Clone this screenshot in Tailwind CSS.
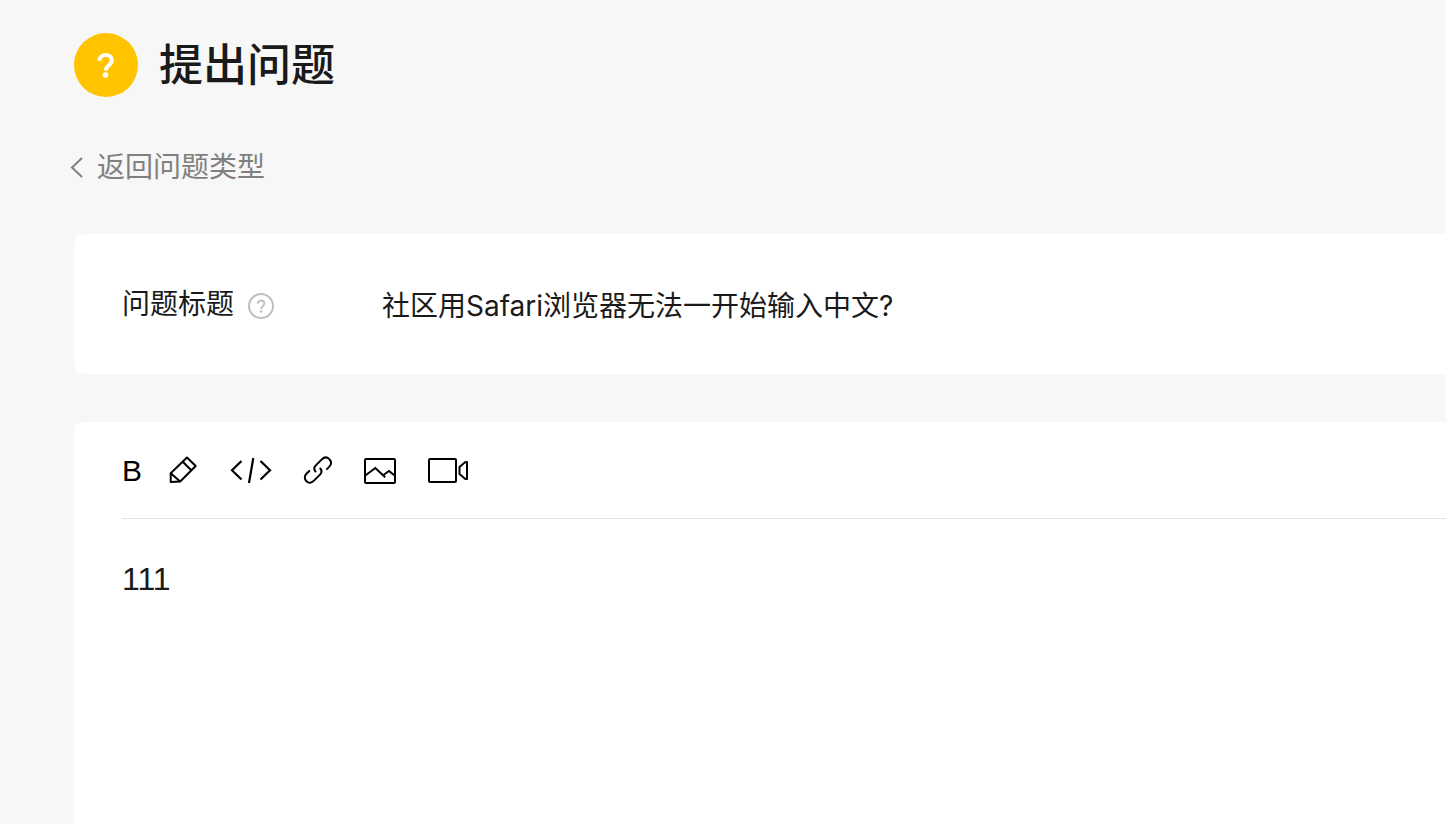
<!DOCTYPE html>
<html lang="zh-CN">
<head>
<meta charset="utf-8">
<meta name="viewport" content="width=device-width, initial-scale=1">
<title>提出问题</title>
<script src="https://cdn.jsdelivr.net/npm/@tailwindcss/browser@4"></script>
</head>
<body class="flex min-h-screen flex-col bg-[#f7f7f7] pl-[74px] pt-[33px] font-['Inter','Noto_Sans_CJK_SC',sans-serif] text-[#1a1a1a]">
  <header class="flex h-16 items-center gap-[21px]">
    <svg class="size-16 shrink-0" viewBox="0 0 64 64" fill="none" aria-hidden="true">
      <circle cx="32" cy="32" r="32" fill="#ffc300"/>
      <path d="M25.500 27.800c0-3.600 2.600-5.900 6.200-5.900s6.100 2.200 6.100 5.300c0 5-6 5-6 10.300" stroke="#fff" stroke-width="4"/>
      <circle cx="31.500" cy="42" r="2.800" fill="#fff"/>
    </svg>
    <h1 class="text-[44px] leading-16 font-medium">提出问题</h1>
  </header>

  <nav class="mt-[50px] -ml-1 h-10">
    <a href="#" class="inline-flex items-center gap-3 text-[28px] leading-10 text-[#808080]">
      <svg class="h-6 w-[15px]" viewBox="0 0 15 24" fill="none" stroke="currentColor" stroke-width="2" aria-hidden="true"><path d="M12 3 2 12.500 12 22"/></svg>
      返回问题类型
    </a>
  </nav>

  <main class="mt-[47px] flex grow flex-col gap-12">
    <section class="flex h-[140px] shrink-0 items-center rounded-l-lg bg-white pl-12">
      <div class="flex w-[260px] shrink-0 items-center gap-[14px]">
        <label for="title" class="text-[28px] leading-10">问题标题</label>
        <button type="button" aria-label="帮助" class="mt-1">
          <svg class="size-[26px]" viewBox="0 0 26 26" fill="none" stroke="#bfbfbf" aria-hidden="true">
            <circle cx="13" cy="13" r="12" stroke-width="2"/>
            <path d="M9.800 10.800c0-2 1.400-3.300 3.300-3.300s3.300 1.200 3.300 3c0 2.700-3.300 2.800-3.300 5.600" stroke-width="1.800"/>
            <circle cx="13.100" cy="18.500" r="1.300" fill="#bfbfbf" stroke="none"/>
          </svg>
        </button>
      </div>
      <input id="title" type="text" value="社区用Safari浏览器无法一开始输入中文?" class="h-12 min-w-0 grow bg-transparent text-[28px] outline-none">
    </section>

    <section class="flex grow flex-col rounded-tl-lg bg-white pl-12">
      <div role="toolbar" aria-label="编辑工具" class="flex h-[97px] shrink-0 items-center gap-6 border-b border-[#e5e5e5] text-black">
        <button type="button" aria-label="加粗" class="w-5 pt-0.5 text-left font-['Liberation_Sans',sans-serif] text-[30px] leading-9">B</button>
        <button type="button" aria-label="标记">
          <svg class="h-9 w-9" viewBox="0 0 36 36" fill="none" stroke="currentColor" stroke-width="2" stroke-linejoin="round" aria-hidden="true"><path d="M21 5.500 29.700 14 14.200 29.500 4.700 30v-8.800zM17 10l8.500 8.500M4.700 21.200l9.500 8.300"/></svg>
        </button>
        <button type="button" aria-label="代码">
          <svg class="h-9 w-[50px]" viewBox="0 0 50 36" fill="none" stroke="currentColor" stroke-width="2.200" aria-hidden="true"><path d="M15.500 9 6 18.300l9.500 9.200M27.300 6 23 31M34.500 9l9.500 9.300-9.500 9.200"/></svg>
        </button>
        <button type="button" aria-label="链接">
          <svg class="h-9 w-9" viewBox="0 0 36 36" fill="none" stroke="currentColor" stroke-width="2" stroke-linecap="round" aria-hidden="true"><path d="M15.500 19.500c-1.700-2-1.500-4.300.3-6.100l6-6c2.400-2.400 5.400-2.400 7.600-.2s2.200 5.200 0 7.400l-2.500 2.500M20.300 16.500c1.700 2 1.500 4.300-.3 6.100l-6.300 6.300c-2.200 2.200-5.200 2.400-7.300.3s-2.200-5.200 0-7.400L9.300 19"/></svg>
        </button>
        <button type="button" aria-label="图片">
          <svg class="h-9 w-10" viewBox="0 0 40 36" fill="none" stroke="currentColor" stroke-width="2" aria-hidden="true"><rect x="5" y="7" width="30" height="24" rx="1"/><path d="M5 23.800 15.300 16l9.900 9.200M23.500 23l5.500-4 6 4.800"/></svg>
        </button>
        <button type="button" aria-label="视频">
          <svg class="h-9 w-12" viewBox="0 0 48 36" fill="none" stroke="currentColor" stroke-width="2" stroke-linejoin="round" aria-hidden="true"><rect x="5" y="7" width="27" height="23" rx="1"/><path d="m43 10-2 .3-5.500 4.700v7l5.500 4.700 2 .3z"/></svg>
        </button>
      </div>
      <textarea aria-label="问题内容" class="grow resize-none bg-transparent pt-9 font-['Liberation_Sans','Noto_Sans_CJK_SC',sans-serif] text-[32px] leading-12 outline-none">111</textarea>
    </section>
  </main>
</body>
</html>
